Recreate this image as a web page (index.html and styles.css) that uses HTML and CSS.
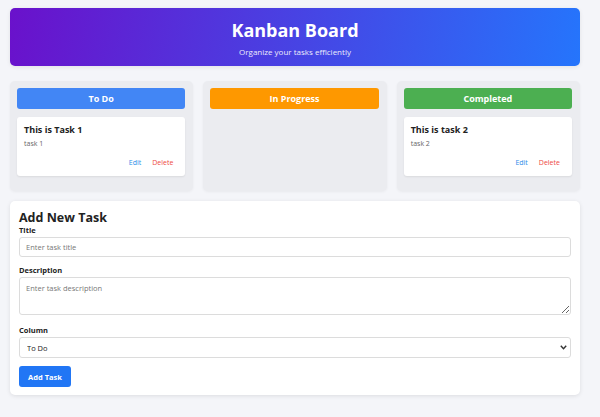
FILE: index.html
```html
<!DOCTYPE html>
<html lang="en">
<head>
<meta charset="utf-8">
<title>Kanban Board</title>
<link rel="stylesheet" href="styles.css">
</head>
<body>
<div class="app">
  <header class="hero">
    <h1 class="hero-title">Kanban Board</h1>
    <p class="hero-sub">Organize your tasks efficiently</p>
  </header>

  <section class="board">
    <div class="column">
      <h2 class="col-head todo">To Do</h2>
      <div class="card">
        <h3 class="card-title">This is Task 1</h3>
        <p class="card-desc">task 1</p>
        <div class="card-actions">
          <button class="link edit">Edit</button>
          <button class="link del">Delete</button>
        </div>
      </div>
    </div>
    <div class="column">
      <h2 class="col-head progress">In Progress</h2>
    </div>
    <div class="column">
      <h2 class="col-head done">Completed</h2>
      <div class="card">
        <h3 class="card-title">This is task 2</h3>
        <p class="card-desc">task 2</p>
        <div class="card-actions">
          <button class="link edit">Edit</button>
          <button class="link del">Delete</button>
        </div>
      </div>
    </div>
  </section>

  <section class="form-card">
    <h2 class="form-title">Add New Task</h2>
    <label class="label first" for="t">Title</label>
    <input class="field" id="t" type="text" placeholder="Enter task title">
    <label class="label" for="d">Description</label>
    <textarea class="field area" id="d" placeholder="Enter task description"></textarea>
    <label class="label after-area" for="c">Column</label>
    <div class="select-wrap">
      <select class="field select" id="c">
        <option>To Do</option>
        <option>In Progress</option>
        <option>Completed</option>
      </select>
      <svg class="chev" width="7" height="5" viewBox="0 0 7 5" aria-hidden="true"><path d="M0.8 0.8 L3.5 3.8 L6.2 0.8" fill="none" stroke="#333" stroke-width="1.4"/></svg>
    </div>
    <button class="submit">Add Task</button>
  </section>
</div>
</body>
</html>
```
FILE: styles.css
```css
* { box-sizing: border-box; }
html, body { margin: 0; padding: 0; }
body {
  background: #f4f5f9;
  font-family: "Open Sans", "Noto Sans", sans-serif;
  color: #333;
}
.app {
  width: 570px;
  margin: 8px 0 0 10px;
  padding-bottom: 20px;
}
.hero {
  height: 58px;
  border-radius: 5px;
  background: linear-gradient(100deg, #6a11cb 0%, #2575fc 100%);
  color: #fff;
  text-align: center;
  padding-top: 9px;
  box-shadow: 0 1px 4px rgba(0,0,0,0.08);
}
.hero-title {
  margin: 0;
  font-size: 18px;
  line-height: 26px;
  font-weight: 700;
}
.hero-sub {
  margin: 4px 0 0;
  font-size: 8px;
  line-height: 10px;
  opacity: 0.9;
}
.board {
  display: flex;
  gap: 10px;
  margin-top: 15px;
  align-items: stretch;
}
.column {
  flex: 1;
  background: #ebecf0;
  border-radius: 5px;
  padding: 7px 8px 15px 7px;
  min-height: 110px;
  box-shadow: 0 1px 3px rgba(0,0,0,0.05);
}
.col-head {
  margin: 0 0 8px;
  height: 21px;
  line-height: 21px;
  border-radius: 3px;
  text-align: center;
  color: #fff;
  font-size: 9px;
  font-weight: 700;
}
.todo { background: #4286f5; }
.progress { background: #fe9800; }
.done { background: #4caf51; }
.card {
  background: #fff;
  border-radius: 3px;
  padding: 7px 7px 9px;
  height: 59px;
  box-shadow: 0 1px 2px rgba(0,0,0,0.08);
  display: flex;
  flex-direction: column;
}
.card-title {
  margin: 0;
  font-size: 9px;
  line-height: 12px;
  font-weight: 700;
  color: #222;
}
.card-desc {
  margin: 3px 0 0;
  font-size: 7px;
  line-height: 9px;
  color: #666;
}
.card-actions {
  margin-top: auto;
  display: flex;
  justify-content: flex-end;
  gap: 1px;
}
.link {
  background: none;
  border: 0;
  font-family: inherit;
  font-size: 7px;
  padding: 0 5px;
  line-height: 9px;
  cursor: pointer;
}
.edit { color: #2b8ce8; }
.del { color: #ee4a3f; }
.form-card {
  margin-top: 10px;
  background: #fff;
  border-radius: 5px;
  padding: 9px 9px 8px;
  box-shadow: 0 1px 4px rgba(0,0,0,0.1);
  display: flex;
  flex-direction: column;
  align-items: flex-start;
}
.form-title {
  margin: 0;
  font-size: 12.5px;
  line-height: 15px;
  font-weight: 700;
  color: #222;
}
.label {
  font-size: 7.5px;
  font-weight: 700;
  line-height: 10px;
  color: #222;
  margin-top: 8px;
  margin-bottom: 2px;
}
.label.first { margin-top: 0; }
.label.after-area { margin-top: 10px; }
.field {
  width: 100%;
  height: 20px;
  border: 1px solid #dcdcdc;
  border-radius: 3px;
  padding: 0 6px;
  font-family: inherit;
  font-size: 7.5px;
  color: #222;
  background: #fff;
}
.field::placeholder { color: #777; }
.area {
  height: 38px;
  padding-top: 5px;
  resize: vertical;
  display: block;
}
.select-wrap {
  position: relative;
  width: 100%;
}
.select {
  display: block;
  height: 21px;
  padding: 0 7px;
  appearance: none;
  -webkit-appearance: none;
}
.chev {
  position: absolute;
  right: 4px;
  top: 8px;
  pointer-events: none;
}
.submit {
  margin-top: 8px;
  width: 52px;
  height: 21px;
  border: 0;
  border-radius: 3px;
  background: #2176f5;
  color: #fff;
  font-family: inherit;
  font-size: 7.5px;
  font-weight: 700;
  cursor: pointer;
}
```
